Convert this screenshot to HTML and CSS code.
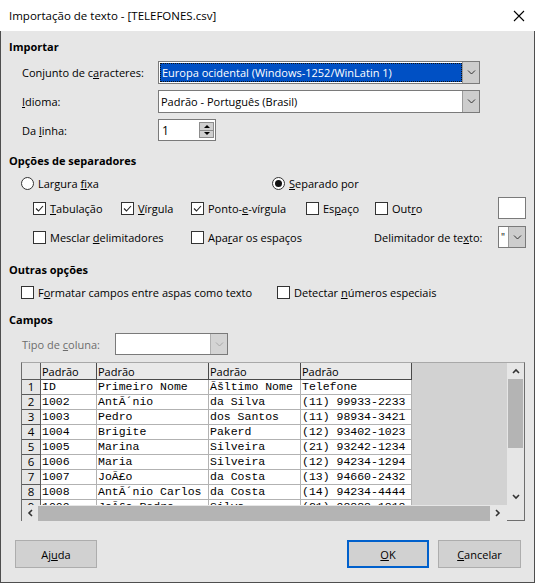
FILE: index.html
```html
<!DOCTYPE html>
<html lang="pt-BR">
<head>
<meta charset="utf-8">
<title>Importação de texto</title>
<link rel="stylesheet" href="styles.css">
</head>
<body>
<div class="win">
  <div class="titlebar">
    <span class="title">Importação de texto - [TELEFONES.csv]</span>
    <svg class="close" width="12" height="12" viewBox="0 0 12 12"><path d="M1 1L11 11M11 1L1 11" stroke="#000" stroke-width="1.1" fill="none"/></svg>
  </div>
  <div class="main">
    <div class="h h-import">Importar</div>
    <div class="row r-form r1">
      <span class="flabel">Conjunto de c<u>a</u>racteres:</span>
      <div class="combo wide">
        <div class="val sel">Europa ocidental (Windows-1252/WinLatin 1)</div>
        <div class="cbtn"><svg width="9" height="5" viewBox="0 0 9 5"><path d="M1 0.5l3.5 3.5L8 0.5" stroke="#333" fill="none"/></svg></div>
      </div>
    </div>
    <div class="row r-form r2">
      <span class="flabel"><u>I</u>dioma:</span>
      <div class="combo wide">
        <div class="val">Padrão - Português (Brasil)</div>
        <div class="cbtn"><svg width="9" height="5" viewBox="0 0 9 5"><path d="M1 0.5l3.5 3.5L8 0.5" stroke="#333" fill="none"/></svg></div>
      </div>
    </div>
    <div class="row r-form r3">
      <span class="flabel">Da <u>l</u>inha:</span>
      <div class="spin">
        <span class="sval">1</span>
        <div class="sbtns"><span class="sb"><i class="tri up"></i></span><span class="sb"><i class="tri dn"></i></span></div>
      </div>
    </div>

    <div class="h h-sep">Opções de separadores</div>
    <div class="row radios">
      <span class="item w-radio1"><span class="rd"></span><span class="lbl">Largura <u>f</u>ixa</span></span>
      <span class="item"><span class="rd on"></span><span class="lbl"><u>S</u>eparado por</span></span>
    </div>
    <div class="row cbrow cb1">
      <span class="item w88"><span class="cb on"><svg viewBox="0 0 11 11"><path d="M2 5.5l2.5 2.5 4.5-5"/></svg></span><span class="lbl"><u>T</u>abulação</span></span>
      <span class="item w70"><span class="cb on"><svg viewBox="0 0 11 11"><path d="M2 5.5l2.5 2.5 4.5-5"/></svg></span><span class="lbl"><u>V</u>írgula</span></span>
      <span class="item w115"><span class="cb on"><svg viewBox="0 0 11 11"><path d="M2 5.5l2.5 2.5 4.5-5"/></svg></span><span class="lbl">Ponto-<u>e</u>-vírgula</span></span>
      <span class="item w69"><span class="cb"></span><span class="lbl">Es<u>p</u>aço</span></span>
      <span class="item w123"><span class="cb"></span><span class="lbl">Out<u>r</u>o</span></span>
      <span class="other"></span>
    </div>
    <div class="row cbrow cb2">
      <span class="item w158"><span class="cb"></span><span class="lbl">Mesclar <u>d</u>elimitadores</span></span>
      <span class="item w183"><span class="cb"></span><span class="lbl">Apa<u>r</u>ar os espaços</span></span>
      <span class="item w124"><span class="lbl">Delimitador de te<u>x</u>to:</span></span>
      <div class="combo small">
        <div class="val q">"</div>
        <div class="cbtn"><svg width="9" height="5" viewBox="0 0 9 5"><path d="M1 0.5l3.5 3.5L8 0.5" stroke="#333" fill="none"/></svg></div>
      </div>
    </div>

    <div class="h h-other">Outras opções</div>
    <div class="row others">
      <span class="item w256"><span class="cb"></span><span class="lbl">F<u>o</u>rmatar campos entre aspas como texto</span></span>
      <span class="item"><span class="cb"></span><span class="lbl">Detectar <u>n</u>úmeros especiais</span></span>
    </div>

    <div class="h h-fields">Campos</div>
    <div class="row r-tipo">
      <span class="tlabel">Tipo de <u>c</u>oluna:</span>
      <div class="combo tipo">
        <div class="val"></div>
        <div class="cbtn"><svg width="9" height="5" viewBox="0 0 9 5"><path d="M1 0.5l3.5 3.5L8 0.5" stroke="#a8a8a8" fill="none"/></svg></div>
      </div>
    </div>

    <div class="tframe">
      <div class="gridarea">
        <table class="grid">
          <colgroup><col class="c0"><col class="c1"><col class="c2"><col class="c3"><col class="c4"></colgroup>
          <thead>
            <tr><th class="rn"></th><th>Padrão</th><th>Padrão</th><th>Padrão</th><th>Padrão</th></tr>
          </thead>
          <tbody>
            <tr><td class="rn">1</td><td>ID</td><td>Primeiro Nome</td><td>Ãšltimo Nome</td><td>Telefone</td></tr>
            <tr><td class="rn">2</td><td>1002</td><td>AntÃ´nio</td><td>da Silva</td><td>(11) 99933-2233</td></tr>
            <tr><td class="rn">3</td><td>1003</td><td>Pedro</td><td>dos Santos</td><td>(11) 98934-3421</td></tr>
            <tr><td class="rn">4</td><td>1004</td><td>Brigite</td><td>Pakerd</td><td>(12) 93402-1023</td></tr>
            <tr><td class="rn">5</td><td>1005</td><td>Marina</td><td>Silveira</td><td>(21) 93242-1234</td></tr>
            <tr><td class="rn">6</td><td>1006</td><td>Maria</td><td>Silveira</td><td>(12) 94234-1294</td></tr>
            <tr><td class="rn">7</td><td>1007</td><td>JoÃ£o</td><td>da Costa</td><td>(13) 94660-2432</td></tr>
            <tr><td class="rn">8</td><td>1008</td><td>AntÃ´nio Carlos</td><td>da Costa</td><td>(14) 94234-4444</td></tr>
            <tr><td class="rn">9</td><td>1009</td><td>JoÃ£o Pedro</td><td>Silva</td><td>(21) 98888-1818</td></tr>
          </tbody>
        </table>
      </div>
      <div class="vscroll">
        <span class="arr"><svg width="8" height="6" viewBox="0 0 8 6"><path d="M1 5l3-3 3 3" stroke="#333" stroke-width="1.6" fill="none"/></svg></span>
        <span class="vthumb"></span>
        <span class="spacer"></span>
        <span class="arr"><svg width="8" height="6" viewBox="0 0 8 6"><path d="M1 1l3 3 3-3" stroke="#333" stroke-width="1.6" fill="none"/></svg></span>
      </div>
      <div class="hscroll">
        <span class="harr"><svg width="6" height="8" viewBox="0 0 6 8"><path d="M5 1L2 4l3 3" stroke="#333" stroke-width="1.6" fill="none"/></svg></span>
        <span class="hthumb"></span>
        <span class="harr"><svg width="6" height="8" viewBox="0 0 6 8"><path d="M1 1l3 3-3 3" stroke="#333" stroke-width="1.6" fill="none"/></svg></span>
      </div>
      <div class="corner"></div>
    </div>

    <div class="row buttons">
      <span class="btn">Aj<u>u</u>da</span>
      <div class="bgroup">
        <span class="btn default"><u>O</u>K</span>
        <span class="btn"><u>C</u>ancelar</span>
      </div>
    </div>
  </div>
</div>
</body>
</html>
```
FILE: styles.css
```css
* { box-sizing: border-box; margin: 0; padding: 0; }
html, body { width: 535px; height: 583px; overflow: hidden; }
body {
  font-family: "Open Sans", "Noto Sans", sans-serif;
  font-size: 11px;
  color: #000;
  background: #e6e6e6;
}
u { text-decoration: underline; text-underline-offset: 1px; }

.win { width: 535px; height: 583px; display: flex; flex-direction: column; }

.titlebar {
  height: 31px; flex: none; background: #fff;
  display: flex; align-items: center; justify-content: space-between;
  padding: 0 10px 0 9px;
}
.title { font-size: 11.5px; }
.close { display: block; }

.main {
  flex: 1;
  border: 1px solid #4e4e4e; border-top: none;
  background: #e6e6e6;
  display: flex; flex-direction: column;
}

.h { font-weight: 700; height: 16px; line-height: 16px; padding-left: 8px; }
.h-import { margin-top: 8px; }
.h-sep { margin-top: 12px; }
.h-other { margin-top: 14px; }
.h-fields { margin-top: 12px; }

.row { display: flex; align-items: center; }

.r-form { padding-left: 21px; margin-top: 6px; height: 23px; }
.r3 { height: 22px; }
.flabel { width: 136px; flex: none; }

.combo {
  display: flex; height: 23px;
  border: 1px solid #7a7a7a; background: #fff;
}
.combo.wide { width: 322px; }
.combo .val {
  flex: 1; display: flex; align-items: center; padding-left: 2px;
  white-space: nowrap; overflow: hidden;
}
.combo .val.sel {
  background: #0050c4; color: #fff;
  border: 1px dotted #111; margin: 1px 0 1px 1px; padding-left: 1px;
}
.cbtn {
  width: 17px; flex: none; background: #cdcdcd;
  border-left: 1px solid #9a9a9a;
  display: flex; align-items: center; justify-content: center;
}

.spin {
  width: 58px; height: 22px; display: flex;
  border: 1px solid #7a7a7a; background: #fff;
}
.sval { flex: 1; padding-left: 3px; font-size: 12px; display: flex; align-items: center; }
.sbtns { width: 15px; display: flex; flex-direction: column; margin: 2px 1px 2px 0; }
.sb {
  flex: 1; background: #d0d0d0; border: 1px solid #8c8c8c;
  display: flex; align-items: center; justify-content: center;
}
.sb + .sb { border-top: none; }
.tri { width: 0; height: 0; border-left: 3px solid transparent; border-right: 3px solid transparent; }
.tri.up { border-bottom: 3px solid #000; }
.tri.dn { border-top: 3px solid #000; }

.item { display: flex; align-items: center; flex: none; white-space: nowrap; }
.item .rd, .item .cb { margin-right: 4px; }
.lbl { white-space: nowrap; }
.radios { height: 16px; margin-top: 6px; padding-left: 20px; }
.w-radio1 { width: 251px; }
.rd {
  width: 13px; height: 13px; border-radius: 50%;
  border: 1px solid #333; background: #fff; flex: none;
  display: flex; align-items: center; justify-content: center;
}
.rd.on::after { content: ""; width: 7px; height: 7px; border-radius: 50%; background: #111; }

.cbrow { height: 22px; padding-left: 32px; }
.cb1 { margin-top: 6px; }
.cb2 { margin-top: 7px; }
.cb {
  width: 13px; height: 13px; flex: none;
  border: 1px solid #333; background: #fff; display: block;
}
.cb svg { display: block; width: 11px; height: 11px; }
.cb svg path { stroke: #222; stroke-width: 1.1; fill: none; }
.w88 { width: 88px; } .w70 { width: 70px; } .w115 { width: 115px; }
.w69 { width: 69px; } .w123 { width: 123px; } .w158 { width: 158px; }
.w183 { width: 183px; } .w124 { width: 124px; } .w256 { width: 256px; }
.other { width: 28px; height: 22px; background: #fff; border: 1px solid #7a7a7a; flex: none; }
.combo.small { width: 28px; height: 22px; }
.combo.small .val { padding-left: 2px; font-size: 10px; }
.combo.small .cbtn { width: 17px; }

.others { height: 16px; margin-top: 6px; padding-left: 20px; }

.r-tipo { height: 22px; margin-top: 5px; padding-left: 21px; }
.tlabel { width: 93px; color: #6d6d6d; flex: none; }
.combo.tipo { width: 113px; height: 22px; }
.combo.tipo .cbtn { background: #d4d4d4; border-left-color: #b0b0b0; }

.tframe {
  margin-top: 7px; margin-left: 20px;
  width: 504px; height: 159px;
  border-left: 1px solid #6e6e6e; border-right: 1px solid #6e6e6e; border-top: 1px solid #a8a8a8;
  display: grid;
  grid-template-columns: 485px 17px;
  grid-template-rows: 142px 16px;
}
.gridarea { background: #d2d2d2; overflow: hidden; }
.grid {
  table-layout: fixed; border-collapse: separate; border-spacing: 0;
  width: 390px;
  font-family: "Liberation Mono", "DejaVu Sans Mono", monospace; font-size: 11.5px;
}
.c0 { width: 19px; } .c1 { width: 56px; } .c2 { width: 112px; } .c3 { width: 92px; } .c4 { width: 111px; }
.grid th {
  height: 17px; background: #e9e9e9; font-weight: 400;
  font-family: "Open Sans", "Noto Sans", sans-serif; font-size: 11px;
  text-align: left; padding: 0 0 0 1px;
  border-right: 1px solid #4a4a4a; border-bottom: 1px solid #4a4a4a;
  line-height: 15px; white-space: nowrap; overflow: hidden;
}
.grid td {
  height: 15px; background: #fff; padding: 0 0 0 1px;
  border-right: 1px solid #b2b2b2; border-bottom: 1px solid #b2b2b2;
  line-height: 14px; white-space: nowrap; overflow: hidden;
}
.grid td.rn, .grid th.rn {
  background: #e6e6e6; padding: 0;
  border-right: 1px solid #5a5a5a; border-bottom: 1px solid #5a5a5a;
}
.grid td.rn {
  font-family: "Open Sans", "Noto Sans", sans-serif; font-size: 11.5px;
  text-align: center; line-height: 14px; vertical-align: bottom;
}

.vscroll { background: #e6e6e6; display: flex; flex-direction: column; align-items: center; }
.vscroll .arr { height: 16px; width: 100%; display: flex; align-items: center; justify-content: center; flex: none; }
.vthumb { width: 15px; height: 69px; background: #b4b4b4; flex: none; }
.spacer { flex: 1; }

.hscroll { background: #e6e6e6; display: flex; align-items: center; }
.harr { width: 16px; height: 16px; display: flex; align-items: center; justify-content: center; flex: none; }
.hthumb { width: 452px; height: 15px; background: #b4b4b4; flex: none; }
.corner { border-bottom: 1px solid #6e6e6e; background: #e6e6e6; }

.buttons {
  margin-top: 19px; height: 28px;
  padding: 0 13px 0 14px;
  justify-content: space-between;
}
.bgroup { display: flex; gap: 9px; }
.btn {
  width: 82px; height: 28px;
  background: #d1d1d1; border: 1px solid #adadad;
  display: flex; align-items: center; justify-content: center;
}
.bgroup .btn:last-child { width: 83px; }
.btn.default { border: 2px solid #0060cc; }
```
